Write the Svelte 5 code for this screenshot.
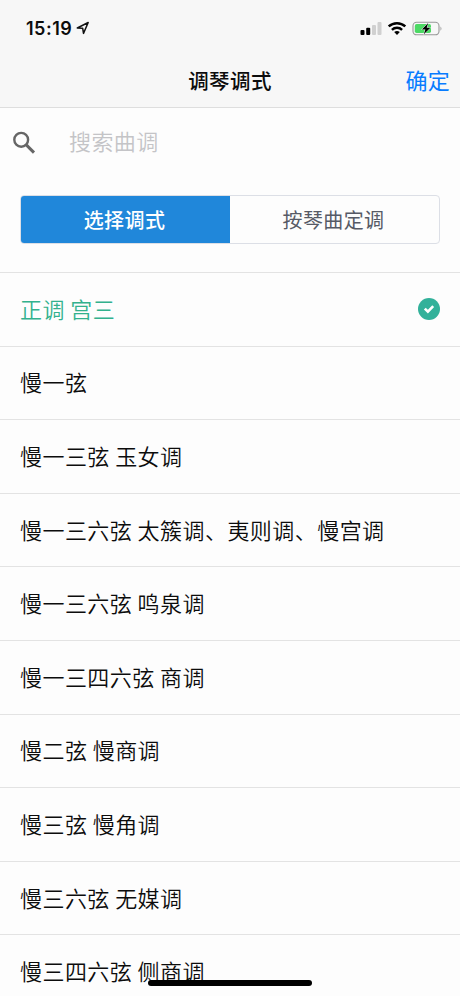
<script>
  const tunings = [
    '正调 宫三',
    '慢一弦',
    '慢一三弦 玉女调',
    '慢一三六弦 太簇调、夷则调、慢宫调',
    '慢一三六弦 鸣泉调',
    '慢一三四六弦 商调',
    '慢二弦 慢商调',
    '慢三弦 慢角调',
    '慢三六弦 无媒调',
    '慢三四六弦 侧商调'
  ];
  let selected = $state(0);
  let tab = $state(0);
</script>

<div class="screen">
  <header>
    <div class="status">
      <span class="time">15:19</span>
      <svg class="arrow" width="14" height="14" viewBox="0 0 14 14">
        <path d="M1.3 7 L12.2 1.5 L7.5 12.4 L6.7 7.3 Z" fill="none" stroke="#111" stroke-width="1.5" stroke-linejoin="round" />
      </svg>
      <svg class="system" width="84" height="18" viewBox="0 0 84 18">
        <rect x="0.5" y="10" width="4" height="5" rx="1" fill="#000" />
        <rect x="6.2" y="7.7" width="4" height="7.3" rx="1" fill="#000" />
        <rect x="12" y="5" width="4" height="10" rx="1" fill="#d0d0d0" />
        <rect x="17.5" y="2" width="4" height="13" rx="1" fill="#d0d0d0" />
        <g fill="none" stroke="#000" stroke-width="2.5">
          <path d="M28.7 6.4 A12.2 12.2 0 0 1 45.3 6.4" />
          <path d="M31.9 9.8 A7.5 7.5 0 0 1 42.1 9.8" />
        </g>
        <path d="M34.2 12.1 Q37 9.8 39.8 12.1 L37 15 Z" fill="#000" />
        <rect x="53" y="2.3" width="26" height="12.5" rx="3.6" fill="none" stroke="#999" stroke-width="1.1" />
        <path d="M80.5 6.4 Q82.4 8.5 80.5 10.7 Z" fill="#999" />
        <rect x="54.8" y="4.1" width="16.2" height="8.9" rx="1.8" fill="#4cd964" />
        <path d="M68.2 3 L61.8 9.4 H65.4 L63.8 14.2 L70.4 7.8 H66.7 Z" fill="#000" stroke="#f7f7f7" stroke-width="1" paint-order="stroke" />
      </svg>
    </div>
    <div class="nav">
      <span></span>
      <h1>调琴调式</h1>
      <button class="confirm">确定</button>
    </div>
  </header>

  <label class="search">
    <svg width="24" height="24" viewBox="0 0 24 24">
      <circle cx="9.2" cy="8.8" r="6.9" fill="none" stroke="#666" stroke-width="2.4" />
      <path d="M14.3 13.9 L22 21.6" stroke="#666" stroke-width="3" />
    </svg>
    <input placeholder="搜索曲调" />
  </label>

  <div class="tabs">
    {#each ['选择调式', '按琴曲定调'] as name, i}
      <button class:active={tab === i} onclick={() => (tab = i)}>{name}</button>
    {/each}
  </div>

  <div class="list">
    {#each tunings as name, i}
      <button class="row" class:chosen={selected === i} onclick={() => (selected = i)}>
        <span>{name}</span>
        {#if selected === i}
          <svg width="22" height="22" viewBox="0 0 22 22">
            <circle cx="11" cy="11" r="11" fill="#32b19a" />
            <path d="M6.8 10.6 L9.9 13.7 L15.2 8.2" fill="none" stroke="#fff" stroke-width="2.6" />
          </svg>
        {/if}
      </button>
    {/each}
  </div>
  <div class="home"></div>
</div>

<style>
  :global(body) {
    margin: 0;
    background: #fdfdfd;
  }
  .screen {
    position: relative;
    display: flex;
    flex-direction: column;
    height: 996px;
    overflow: hidden;
    background: #fdfdfd;
    font-family: 'Noto Sans CJK SC', sans-serif;
    color: #0c0c0c;
  }
  button {
    margin: 0;
    padding: 0;
    border: 0;
    background: none;
    font: inherit;
    color: inherit;
    white-space: nowrap;
  }
  header {
    flex: none;
    box-sizing: border-box;
    height: 108px;
    background: #f7f7f7;
    border-bottom: 1px solid #dedede;
  }
  .status {
    display: flex;
    align-items: center;
    height: 56px;
    padding: 0 16px 0 26px;
  }
  .time {
    padding-top: 2px;
    font: 600 18px/22px Inter, sans-serif;
    letter-spacing: 0.5px;
  }
  .arrow {
    margin-left: 4px;
  }
  .system {
    margin-left: auto;
    margin-top: 2px;
  }
  .nav {
    display: grid;
    grid-template-columns: 1fr auto 1fr;
    align-items: center;
    height: 48px;
    padding: 0 10px;
  }
  h1 {
    margin: 0;
    font-size: 20.5px;
    line-height: 30px;
    font-weight: 500;
    letter-spacing: 0.4px;
  }
  .confirm {
    justify-self: end;
    margin-top: -2px;
    font-size: 22px;
    line-height: 32px;
    letter-spacing: 0.3px;
    color: #087cff;
  }
  .search {
    flex: none;
    display: flex;
    align-items: center;
    height: 69px;
    padding-left: 12px;
  }
  input {
    width: 300px;
    margin-left: 33px;
    padding: 0 0 5px;
    border: 0;
    outline: 0;
    background: none;
    font: 350 22px/32px 'Noto Sans CJK SC', sans-serif;
    letter-spacing: 0.4px;
  }
  input::placeholder {
    color: #c4c4c7;
    opacity: 1;
  }
  .tabs {
    flex: none;
    display: flex;
    box-sizing: border-box;
    height: 49px;
    margin: 18px 20px 28px;
    border: 1px solid #dcdfe6;
    border-radius: 4px;
    overflow: hidden;
  }
  .tabs button {
    flex: 1;
    padding: 0 2px 1px 0;
    font-size: 20px;
    font-weight: 400;
    letter-spacing: 0.4px;
    color: #565a66;
  }
  .tabs .active {
    color: #fff;
    background: #2087da;
    font-weight: 500;
  }
  .list {
    display: flex;
    flex-direction: column;
  }
  .row {
    flex: none;
    display: flex;
    align-items: center;
    justify-content: space-between;
    box-sizing: border-box;
    height: 73.6px;
    padding: 0 20px;
    border-top: 1px solid #e3e3e3;
    font-size: 22px;
    font-weight: 350;
    line-height: 32px;
    letter-spacing: 0.45px;
  }
  .row span {
    padding-bottom: 3px;
  }
  .chosen {
    color: #32b18d;
  }
  .home {
    position: absolute;
    left: 148px;
    bottom: 10px;
    width: 164px;
    height: 6px;
    border-radius: 3px;
    background: #000;
  }
</style>
